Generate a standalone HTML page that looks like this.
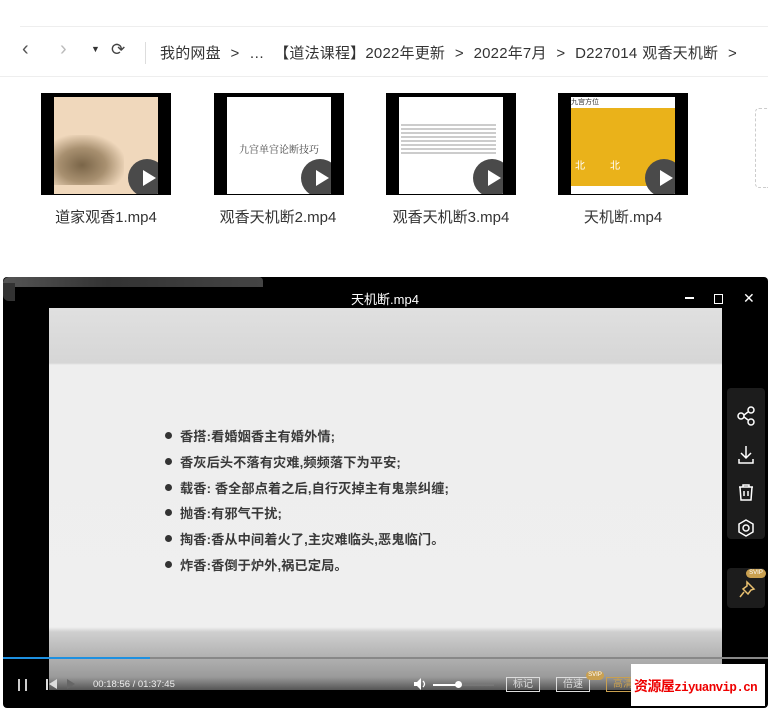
<!DOCTYPE html>
<html><head><meta charset="utf-8"><style>
*{margin:0;padding:0;box-sizing:border-box}
body{width:768px;height:708px;background:#fff;position:relative;overflow:hidden;font-family:"Liberation Sans","Noto Sans CJK SC",sans-serif}
.a{position:absolute}
.crumb{top:42px;font-size:15px;color:#333;white-space:nowrap}
.th{top:93px;width:130px;height:102px;background:#000;overflow:hidden}
.in{position:absolute;left:13px;top:4px;width:104px;height:97px;overflow:hidden}
.play{position:absolute;right:-8px;top:62px;width:38px;height:38px;border-radius:50%;background:#4a4a4a}
.play:after{content:"";position:absolute;left:15px;top:11px;border-left:13px solid #fff;border-top:8px solid transparent;border-bottom:8px solid transparent}
.lbl{top:206px;font-size:15px;color:#333;width:160px;text-align:center}
.li{position:absolute;left:165px;font-size:13.2px;font-weight:bold;color:#3a3a3a;letter-spacing:0.1px;white-space:nowrap}
.li:before{content:"";display:inline-block;width:7px;height:7px;border-radius:50%;background:#333;margin-right:8px;vertical-align:2px}
.btn{position:absolute;top:677px;height:15px;border:1px solid #ddd;color:#ddd;font-size:10px;line-height:13px;text-align:center;width:34px}
</style></head><body>
<div class="a" style="left:20px;top:26px;width:748px;height:1px;background:#eee"></div>
<div class="a" style="left:0;top:76px;width:768px;height:1px;background:#eee"></div>
<div class="a crumb" style="left:22px;top:38px;font-size:20px;color:#555">&#8249;</div>
<div class="a crumb" style="left:60px;top:38px;font-size:20px;color:#bbb">&#8250;</div>
<div class="a crumb" style="left:91px;top:44px;font-size:9px;color:#333">&#9660;</div>
<div class="a crumb" style="left:111px;top:40px;font-size:17px;color:#444">&#10227;</div>
<div class="a" style="left:145px;top:42px;width:1px;height:22px;background:#ddd"></div>
<div class="a crumb" style="left:160px;letter-spacing:0.2px;word-spacing:0.5px">我的网盘 &nbsp;&gt; &nbsp;… &nbsp;【道法课程】2022年更新 &nbsp;&gt; &nbsp;2022年7月 &nbsp;&gt; &nbsp;D227014 观香天机断 &nbsp;&gt;</div>

<div class="a th" style="left:41px"><div class="in" style="background:#f0d8bc"><div style="position:absolute;left:0;top:38px;width:70px;height:50px;background:radial-gradient(ellipse at 40% 60%,#7a6548 0,#a89070 40%,#f0d8bc 75%)"></div><div class="play"></div></div></div>
<div class="a th" style="left:214px"><div class="in" style="background:#fff"><div style="position:absolute;left:12px;top:44px;font-size:10px;color:#444;font-family:'Noto Serif CJK SC',serif">九宫单宫论断技巧</div><div class="play"></div></div></div>
<div class="a th" style="left:386px"><div class="in" style="background:#fff"><div style="position:absolute;left:2px;top:27px;width:95px;height:30px;background:repeating-linear-gradient(#ccc 0 2px,#fff 2px 4px)"></div><div class="play"></div></div></div>
<div class="a th" style="left:558px"><div class="in" style="background:#eab21a;left:13px"><div style="height:11px;background:#fff;font-size:7px;color:#333">九宫方位</div><div style="position:absolute;left:4px;top:60px;color:#fff;font-size:10px">北 &nbsp; &nbsp; &nbsp; &nbsp; 北</div><div style="position:absolute;left:0;bottom:0;width:104px;height:8px;background:#fff"></div><div class="play"></div></div></div>
<div class="a" style="left:755px;top:108px;width:13px;height:80px;border:1px dashed #ccc;border-right:none;border-radius:4px 0 0 4px"></div>
<div class="a lbl" style="left:26px">道家观香1.mp4</div>
<div class="a lbl" style="left:198px">观香天机断2.mp4</div>
<div class="a lbl" style="left:371px">观香天机断3.mp4</div>
<div class="a lbl" style="left:543px">天机断.mp4</div>

<!-- player -->
<div class="a" style="left:3px;top:277px;width:765px;height:431px;background:#000;border-radius:4px"></div>
<div class="a" style="left:3px;top:277px;width:260px;height:10px;background:linear-gradient(90deg,#555,#333 40%,#444);border-radius:6px 4px 0 0"></div>
<div class="a" style="left:3px;top:283px;width:12px;height:18px;background:#333;border-radius:0 0 0 6px"></div>
<div class="a" style="left:49px;top:308px;width:673px;height:382px;background:linear-gradient(#e0e0e0 0,#d6d6d6 55px,#eeeeee 57px,#efefef 319px,#cfcfcf 324px,#9a9a9a 369px,#555 382px)"></div>
<div class="a" style="left:385px;top:292px;transform:translateX(-50%);color:#fff;font-size:13px;line-height:16px;z-index:2">天机断.mp4</div>
<div class="a" style="left:685px;top:297px;width:9px;height:2px;background:#fff"></div>
<div class="a" style="left:714px;top:294px;width:9px;height:10px;border:1.5px solid #fff"></div>
<div class="a" style="left:743px;top:290px;color:#fff;font-size:14px">✕</div>
<div class="li" style="top:426px">香搭:看婚姻香主有婚外情;</div>
<div class="li" style="top:452px">香灰后头不落有灾难,频频落下为平安;</div>
<div class="li" style="top:478px">载香: 香全部点着之后,自行灭掉主有鬼祟纠缠;</div>
<div class="li" style="top:503px">抛香:有邪气干扰;</div>
<div class="li" style="top:529px">掏香:香从中间着火了,主灾难临头,恶鬼临门。</div>
<div class="li" style="top:555px">炸香:香倒于炉外,祸已定局。</div>
<div class="a" style="left:727px;top:388px;width:38px;height:151px;background:#1c1c1c;border-radius:4px"></div>
<svg class="a" style="left:727px;top:388px" width="38" height="225" fill="none" stroke="#fff" stroke-width="1.5">
<circle cx="14" cy="28" r="3"/><circle cx="24" cy="22" r="3"/><circle cx="24" cy="34" r="3"/><path d="M17 27l4-3M17 29l4 3"/>
<path d="M19 58v12M14 65l5 5 5-5M12 71v4h14v-4"/>
<path d="M12 99h14M16 99v-2h6v2M13 99l1 13h10l1-13M17 103v5M21 103v5"/>
<path d="M19 132l7 4v8l-7 4-7-4v-8z"/><circle cx="19" cy="140" r="3"/>
</svg>
<div class="a" style="left:727px;top:568px;width:38px;height:40px;background:#1c1c1c;border-radius:4px"></div>
<div class="a" style="left:746px;top:569px;width:20px;height:9px;background:#c9a050;border-radius:5px;font-size:6px;color:#fff;text-align:center;line-height:9px">SVIP</div>
<svg class="a" style="left:737px;top:579px" width="20" height="20" fill="none" stroke="#e8c070" stroke-width="1.5"><path d="M10 3l7 7-3 1-3 4-5-5 4-3zM7 13l-4 5"/></svg>
<div class="a" style="left:3px;top:657px;width:765px;height:2px;background:#888"></div>
<div class="a" style="left:3px;top:657px;width:147px;height:2px;background:#1e90e0"></div>
<div class="a" style="left:18px;top:679px;width:2px;height:12px;background:#ccc"></div>
<div class="a" style="left:25px;top:679px;width:2px;height:12px;background:#ccc"></div>
<div class="a" style="left:46px;top:679px;width:2px;height:11px;background:#ddd"></div>
<div class="a" style="left:49px;top:679px;border-right:8px solid #ddd;border-top:5.5px solid transparent;border-bottom:5.5px solid transparent"></div>
<div class="a" style="left:67px;top:679px;border-left:8px solid #666;border-top:5.5px solid transparent;border-bottom:5.5px solid transparent"></div>
<div class="a" style="left:93px;top:679px;color:#eee;font-size:9.5px">00:18:56 / 01:37:45</div>
<svg class="a" style="left:412px;top:677px" width="16" height="14"><path d="M2 5h3l4-4v12l-4-4H2z" fill="#fff"/><path d="M11 4q3 3 0 6" stroke="#fff" fill="none" stroke-width="1.3"/></svg>
<div class="a" style="left:433px;top:684px;width:25px;height:2px;background:#fff"></div>
<div class="a" style="left:458px;top:684px;width:36px;height:2px;background:#777"></div>
<div class="a" style="left:455px;top:681px;width:7px;height:7px;border-radius:50%;background:#fff"></div>
<div class="btn" style="left:506px">标记</div>
<div class="btn" style="left:556px">倍速</div>
<div class="a" style="left:586px;top:671px;width:18px;height:9px;background:#c9a050;border-radius:5px;font-size:6px;color:#fff;text-align:center;line-height:9px">SVIP</div>
<div class="btn" style="left:606px;border-color:#c9a050;color:#c9a050">高清</div>
<div class="a" style="left:631px;top:664px;width:134px;height:42px;background:#fff"></div>
<div class="a" style="left:634px;top:676px;color:#e00;font-size:14px;font-weight:bold;font-family:'Liberation Mono','Noto Sans CJK SC',monospace;white-space:nowrap;letter-spacing:-0.6px">资源屋<span style="font-size:12.5px">ziyuanvip.cn</span></div>
</body></html>
